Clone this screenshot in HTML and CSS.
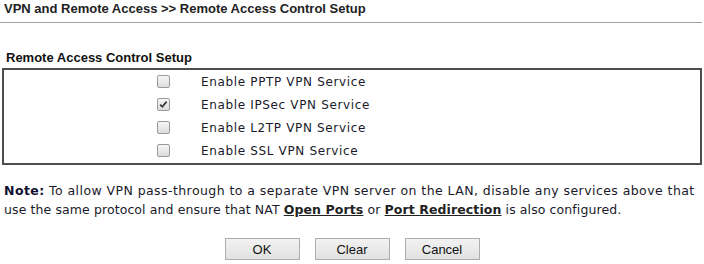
FILE: index.html
```html
<!DOCTYPE html>
<html>
<head>
<meta charset="utf-8">
<link rel="stylesheet" href="styles.css">
</head>
<body>
<div class="page">
  <div class="title">VPN and Remote Access &gt;&gt; Remote Access Control Setup</div>
  <div class="section-title">Remote Access Control Setup</div>
  <div class="box">
    <div class="row"><span class="cb"></span><span class="lbl">Enable PPTP VPN Service</span></div>
    <div class="row"><span class="cb checked"><svg width="11" height="11" viewBox="0 0 11 11"><path d="M2.2 5.6 L4.3 7.8 L8.6 2.6" fill="none" stroke="#333" stroke-width="1.7"/></svg></span><span class="lbl">Enable IPSec VPN Service</span></div>
    <div class="row"><span class="cb"></span><span class="lbl">Enable L2TP VPN Service</span></div>
    <div class="row"><span class="cb"></span><span class="lbl">Enable SSL VPN Service</span></div>
  </div>
  <div class="note"><span class="line1"><b>Note:</b> To allow VPN pass-through to a separate VPN server on the LAN, disable any services above that</span><br><span class="line2">use the same protocol and ensure that NAT <a class="lnk">Open Ports</a> or <a class="lnk">Port Redirection</a> is also configured.</span></div>
  <div class="buttons">
    <button class="btn">OK</button>
    <button class="btn">Clear</button>
    <button class="btn">Cancel</button>
  </div>
</div>
</body>
</html>
```
FILE: styles.css
```css
html, body {
  margin: 0;
  padding: 0;
  background: #fff;
}
.page {
  width: 704px;
  height: 264px;
  overflow: hidden;
}
.title {
  font-family: "Liberation Sans", Arial, sans-serif;
  font-weight: bold;
  font-size: 13px;
  color: #222;
  line-height: 15px;
  padding: 1px 0 6px 4px;
  border-bottom: 1px solid #a0a0a0;
  margin-right: 2px;
}
.section-title {
  font-family: "Liberation Sans", Arial, sans-serif;
  font-weight: bold;
  font-size: 13px;
  color: #111;
  line-height: 15px;
  padding: 27px 0 3px 6px;
}
.box {
  box-sizing: border-box;
  height: 97px;
  margin: 0 2px;
  border: 2px solid #4d4d4d;
  padding: 0 0 1px 0;
}
.row {
  display: flex;
  align-items: center;
  height: 23px;
}
.cb {
  box-sizing: border-box;
  width: 13px;
  height: 13px;
  margin-left: 153px;
  border: 1px solid #9a9a9a;
  border-radius: 2px;
  background: linear-gradient(#f6f6f6, #dcdcdc);
  display: flex;
  align-items: center;
  justify-content: center;
}
.cb svg {
  display: block;
}
.lbl {
  margin-left: 31px;
  font-family: "DejaVu Sans", Verdana, sans-serif;
  font-size: 12px;
  letter-spacing: 0.65px;
  color: #1a1a2a;
}
.note {
  font-family: "DejaVu Sans", Tahoma, sans-serif;
  font-size: 12.5px;
  line-height: 19px;
  color: #1a1a2a;
  padding: 16px 0 0 4px;
  white-space: nowrap;
}
.line1 {
  letter-spacing: 0.43px;
}
.line2 {
  letter-spacing: 0.1px;
}
.note b {
  color: #101030;
}
.lnk {
  font-weight: bold;
  text-decoration: underline;
  color: #222;
}
.buttons {
  display: flex;
  justify-content: center;
  gap: 15px;
  padding-top: 19px;
}
.btn {
  box-sizing: border-box;
  width: 75px;
  height: 22px;
  border: 1px solid #adadad;
  border-radius: 0;
  background: linear-gradient(#f2f2f2, #e1e1e1);
  font-family: "Liberation Sans", Arial, sans-serif;
  font-size: 13px;
  color: #111;
  padding: 0;
}
```
